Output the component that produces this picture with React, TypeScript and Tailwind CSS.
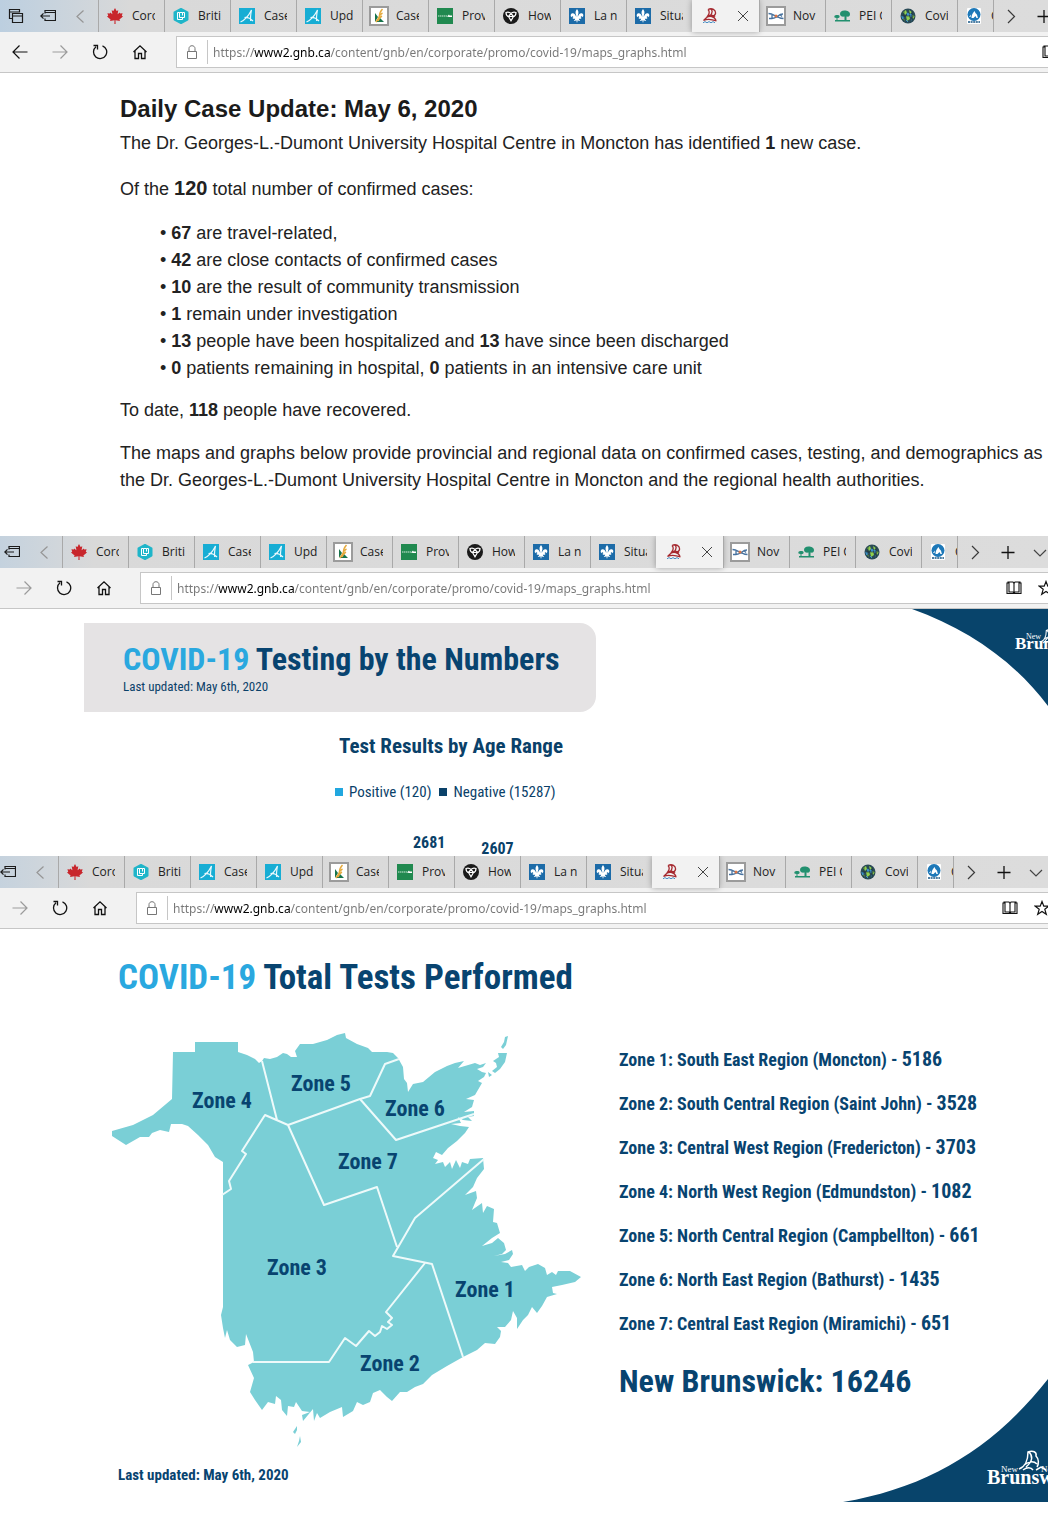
import { type ReactNode } from "react";

const condensed = "font-['Roboto_Condensed','Open_Sans_Condensed','Liberation_Sans_Narrow','Noto_Sans',sans-serif]";

function Svg({ children, className = "size-4", box = "0 0 16 16" }: { children: ReactNode; className?: string; box?: string }) {
  return (
    <svg viewBox={box} className={`shrink-0 ${className}`} fill="none" aria-hidden="true">
      {children}
    </svg>
  );
}

const Leaf = () => (
  <Svg>
    <path
      d="M8 0 6.4 3 4.7 2.2 5.4 6.2 3.2 4.4 2.8 5.6.4 5.2l.8 2.6L0 8.4l3.6 3-.6 1.5 4.5-.6L7.4 16h1.2l-.1-3.7 4.5.6-.6-1.5 3.6-3-1.2-.6.8-2.6-2.4.4-.4-1.2-2.2 1.8.7-4L9.600 3z"
      fill="#c8262c"
    />
  </Svg>
);
const Hexagon = () => (
  <Svg>
    <path d="M8 1 14.500 4.500v7L8 15l-6.500-3.500v-7z" fill="#1fb5c9" stroke="#1fb5c9" strokeWidth="2" strokeLinejoin="round" />
    <path d="M6.500 4.500h-2v7h5v-2M9.500 4.500h2v5h-5v-5h3v3" stroke="#fff" />
  </Svg>
);
const Alberta = () => (
  <Svg>
    <path d="M0 0h16v16H0z" fill="#17add4" />
    <path d="M1.500 14C6 12 10 7 12.500 2c-.8 4-1.300 8-.8 11M5.500 9.500c3-.6 5 0 8.500 3.500" stroke="#e9f8fc" strokeWidth="1.200" />
  </Svg>
);
const Sask = () => (
  <Svg className="size-5" box="0 0 20 20">
    <path d="M1 1h18v18H1z" fill="#fff" stroke="#9b9b9b" strokeWidth="2" />
    <path d="M6 7l3 4-3 5zM11 12l4 4H7z" fill="#16734b" />
    <path d="M13.500 3c-2 2-3 4-3 7-.5 2-2 4-3.500 6M13.500 7c-2 1-3 2-3.500 4M13 10c-2 1-3 2-4 5" stroke="#e5a93c" strokeWidth="1.500" />
  </Svg>
);
const Green = () => (
  <Svg>
    <path d="M0 0h16v16H0z" fill="#20894f" />
    <path d="M1 8h9" stroke="#cfe9da" strokeDasharray="1.500 .5" />
    <path d="M10 8.500l2-2 .5 1H15v1.500h-3z" fill="#fff" />
  </Svg>
);
const Ontario = () => (
  <Svg>
    <circle cx="8" cy="8" r="8" fill="#1a1a1a" />
    <path d="M3 4.500c2-.8 3.500-.5 5 1 1.500-1.500 3-1.800 5-1 0 2-1 3.500-2.500 4L8 12.800 5.500 8.500C4 8 3 6.500 3 4.500zM5.500 8.500 8 5.500l2.500 3z" stroke="#fff" strokeWidth="1.200" />
  </Svg>
);
const Fleur = () => (
  <Svg>
    <path d="M0 0h16v16H0z" fill="#1c6ba8" />
    <path
      d="M8 1C6.500 3 6 4.300 7.200 7.500V9C6.500 6.500 5 5 3.400 5.300 1.500 5.700 1 8 2.600 9.300c.2-1.300 1.300-1.400 1.900 0H3.800v1.500h2.400c-.2 1-.7 1.600-1.500 2 1.200.3 2-.1 2.500-.8L8 15l.8-3c.5.7 1.300 1.100 2.500.8-.8-.4-1.300-1-1.500-2h2.400V9.300h-.7c.6-1.400 1.700-1.300 1.900 0C15 8 14.500 5.700 12.600 5.300 11 5 9.500 6.500 8.800 9V7.500C10 4.300 9.500 3 8 1z"
      fill="#fff"
    />
  </Svg>
);
const Ship = () => (
  <Svg>
    <path d="M6 1.500c4-2 8 .5 7.500 4-.5 2-2 2.500-3 2.500M6 1.500C8.500 4 7 8 1.500 12.500c3-1.500 9-1 13 .5M9 1c2 2 1.500 4-1 7M4.500 9.500c3-2 8-1.500 9.500 3M6.500 7.500c3-.8 5-.3 6.500 1.500" stroke="#a62a30" strokeWidth="1.300" />
    <path d="M1 14.800l2-1.200 2 1.200L7 13.600l2 1.200 2-1.200 2 1.200" stroke="#4a8fc4" />
  </Svg>
);
const NovaScotia = () => (
  <Svg className="size-5" box="0 0 20 20">
    <path d="M1 1h18v18H1z" fill="#fff" stroke="#9b9b9b" strokeWidth="2" />
    <path d="M2.500 7.500c5 0 9 5 15 5M3 12.500h3c5 0 6-4.500 11-4.500M6 9v3M14 8.500l2 2" stroke="#47729f" strokeWidth="1.300" />
    <circle cx="10" cy="10" r="1.500" fill="#db7545" />
  </Svg>
);
const Trees = () => (
  <Svg>
    <path d="M6 6c0-2 1.500-3.500 4.500-3.500S16 4 16 6s-1 3-3.500 2.500V12H16v1.500H1V12h1.500v-2C.5 10 0 9 .5 8s4.500-1.500 5 0-.5 2-2 2v2h7V8.500C8 9 6 8 6 6z" fill="#22906f" />
  </Svg>
);
const Globe = () => (
  <Svg>
    <circle cx="8" cy="8" r="7.500" fill="#294a56" />
    <path d="M3 4l3-2 1 3-2 2zM9 2l3 2-2 2zM6 8l3-1 1 4-3 2zM12 7l3 1-2 3zM2 10l2 0 1 3z" fill="#8fd04e" />
    <path d="M1.500 8l2.500 1-1 2zM7 5l2 1-1 2zM10 6l2 1-1 2zM6 12l2 2M11 12l1 0" fill="#3b92cf" stroke="#3b92cf" />
    <path d="M4 3v10M12 3v10M1 8h14" stroke="#1f3336" strokeWidth=".6" />
  </Svg>
);
const Polar = () => (
  <Svg>
    <rect x="1" width="14" height="16" rx="1" fill="#fff" />
    <circle cx="8" cy="6.500" r="6.500" fill="#1d78b8" />
    <path d="M5.500 10c0-3 1-4.500 3-7 1 1.500.5 2 2 3 1 1.500 1 3 1.500 4h-1.500l-1-2-2 2zM3 9l2-2.500L4.500 9z" fill="#fff" />
    <path d="M2 14h12" stroke="#4f7fa3" strokeWidth="2" strokeDasharray="2 .6" />
  </Svg>
);

const tabs: { icon: () => ReactNode; label: string; active?: boolean; short?: boolean }[] = [
  { icon: Leaf, label: "Coro" },
  { icon: Hexagon, label: "Briti" },
  { icon: Alberta, label: "Case" },
  { icon: Alberta, label: "Upd" },
  { icon: Sask, label: "Case" },
  { icon: Green, label: "Prov" },
  { icon: Ontario, label: "How" },
  { icon: Fleur, label: "La n" },
  { icon: Fleur, label: "Situa" },
  { icon: Ship, label: "", active: true },
  { icon: NovaScotia, label: "Nov" },
  { icon: Trees, label: "PEI C" },
  { icon: Globe, label: "Covi" },
  { icon: Polar, label: "C", short: true },
];

const iconButton = "flex h-8 w-8 shrink-0 items-center justify-center";

function Chrome({ id, shift = "" }: { id: string; shift?: string }) {
  return (
    <header className="overflow-hidden border-b border-[#c6c6c6] bg-[#f2f2f2] font-['Open_Sans','Noto_Sans',sans-serif]">
      <nav className={`flex h-8 bg-linear-to-r from-[#bccfe0] via-[#d9d9d9] via-[130px] to-[#dcdcdc] ${shift}`} aria-label="Tabs">
        <div className="flex w-[98px] shrink-0">
          <button className={iconButton} aria-label="Tabs set aside">
            <Svg>
              <path d="M4.500 10.500h-3v-9h10v3M1.500 4h10M4.500 5.500h10v9h-10zM4.500 8h10" stroke="#1b1b1b" strokeWidth="1.200" />
            </Svg>
          </button>
          <button className={iconButton} aria-label="Set tabs aside">
            <Svg>
              <path d="M5 5.500v-3h10.500v10H5v-2M5 4.500h10.500M.8 8H10M3.500 5.300.8 8l2.700 2.700" stroke="#1b1b1b" strokeWidth="1.200" />
            </Svg>
          </button>
          <button className={iconButton} aria-label="Scroll left">
            <Svg>
              <path d="M11.500 2.500 5 8.500l6.500 6" stroke="#969696" strokeWidth="1.200" />
            </Svg>
          </button>
        </div>
        {tabs.map((tab, i) =>
          tab.active ? (
            <div key={i} className="flex w-[67px] shrink-0 items-center justify-between bg-[#f2f2f2] px-2.5 shadow-[0_0_6px_#0005]">
              <button aria-label="Maps and graphs">
                <tab.icon />
              </button>
              <button aria-label="Close tab">
                <Svg className="size-3" box="0 0 12 12">
                  <path d="m1 1 10 10M11 1 1 11" stroke="#444" />
                </Svg>
              </button>
            </div>
          ) : (
            <button
              key={i}
              className={`flex shrink-0 items-center overflow-hidden border-l border-[#a9a9a9] pl-2 text-left text-xs text-[#222] ${tab.short ? "w-9" : "w-[66px]"}`}
            >
              <span className="flex w-[25px] shrink-0">
                <span className="flex w-4 justify-center">
                  <tab.icon />
                </span>
              </span>
              <span className="w-[23px] overflow-hidden whitespace-nowrap">{tab.label}</span>
            </button>
          ),
        )}
        <div className="flex shrink-0 border-l border-[#a9a9a9] pl-0.5">
          <button className={iconButton} aria-label="Scroll right">
            <Svg>
              <path d="m4 2 6.500 6.500L4 15" stroke="#3a3a3a" strokeWidth="1.200" />
            </Svg>
          </button>
          <button className={iconButton} aria-label="New tab">
            <Svg>
              <path d="M1.500 8.500h13M8 2v13" stroke="#111" strokeWidth="1.300" />
            </Svg>
          </button>
          <button className={iconButton} aria-label="Tab previews">
            <Svg>
              <path d="m2 6 6 6 6-6" stroke="#444" strokeWidth="1.200" />
            </Svg>
          </button>
        </div>
      </nav>
      <div className={`flex h-10 items-center ${shift}`}>
        <div className="flex w-44 shrink-0 gap-2 pl-1">
          <button className={iconButton} aria-label="Back">
            <Svg>
              <path d="M15.500 8H1M7.500 1.500 1 8l6.500 6.500" stroke="#111" strokeWidth="1.200" />
            </Svg>
          </button>
          <button className={iconButton} aria-label="Forward">
            <Svg>
              <path d="M.5 8H15M8.500 1.500 15 8l-6.500 6.500" stroke="#9b9b9b" strokeWidth="1.200" />
            </Svg>
          </button>
          <button className={iconButton} aria-label="Refresh">
            <Svg>
              <path d="M10.500 1.800A6.600 6.600 0 1 1 4 2.800M1.500 1.500h4V5.500" stroke="#111" strokeWidth="1.300" />
            </Svg>
          </button>
          <button className={iconButton} aria-label="Home">
            <Svg>
              <path d="M1.500 8 8 1.800 14.500 8M3 7v7.500h3.500v-5h3v5H13V7" stroke="#111" strokeWidth="1.300" />
            </Svg>
          </button>
        </div>
        <div className="flex h-8 w-[1100px] shrink-0 items-center border border-[#c6c6c6] bg-white">
          <span className="flex w-[30px] justify-center">
            <Svg>
              <path d="M3.500 7.500h9v7h-9zM5 7.500v-3C5 .8 11 .8 11 4.500v3" stroke="#777" />
            </Svg>
          </span>
          <label htmlFor={id} className="sr-only">
            Address
          </label>
          <input
            id={id}
            readOnly
            value="https://www2.gnb.ca/content/gnb/en/corporate/promo/covid-19/maps_graphs.html"
            className="h-6 w-[827px] border-l border-[#c6c6c6] bg-[linear-gradient(90deg,#777_46px,#000_46px,#000_122px,#777_122px)] bg-clip-text pl-[5px] font-['Noto_Sans',sans-serif] text-xs text-transparent outline-none"
          />
          <button className={iconButton} aria-label="Reading view">
            <Svg>
              <path d="M8 3.500v10M1 3h1v-1h5l1 1.500L9 2h5v1h1v10.500H1zM3 2.500v9.500h4l1 1 1-1h4V2.500" stroke="#111" strokeWidth="1.100" />
            </Svg>
          </button>
          <button className={iconButton} aria-label="Favorites">
            <Svg>
              <path d="m8 1.500 1.800 4.700h5l-4 3.100 1.500 5L8 11.400l-4.300 2.900 1.500-5-4-3.100h5z" stroke="#111" strokeWidth="1.200" />
            </Svg>
          </button>
        </div>
      </div>
    </header>
  );
}

const regions = [
  ["Zone 1: South East Region (Moncton)", "5186"],
  ["Zone 2: South Central Region (Saint John)", "3528"],
  ["Zone 3: Central West Region (Fredericton)", "3703"],
  ["Zone 4: North West Region (Edmundston)", "1082"],
  ["Zone 5: North Central Region (Campbellton)", "661"],
  ["Zone 6: North East Region (Bathurst)", "1435"],
  ["Zone 7: Central East Region (Miramichi)", "651"],
];

const zones: [string, number, number][] = [
  ["Zone 1", 485, 1297],
  ["Zone 2", 390, 1371],
  ["Zone 3", 297, 1275],
  ["Zone 4", 222, 1108],
  ["Zone 5", 321, 1091],
  ["Zone 6", 415, 1116],
  ["Zone 7", 368, 1169],
];

const outline =
  "M173 1052H195V1042H238V1052L247 1055 255 1059 259 1063 262 1061 264 1058 270 1059 277 1057 283 1053 287 1054 291 1057 297 1057 295 1051 300 1044 313 1044 327 1040 337 1035 345 1033 346 1038 357 1044 368 1048 372 1052 387 1052 393 1053 398 1058 403 1067 404 1079 407 1083 408 1092 413 1084 423 1082 435 1072 447 1066 455 1063 464 1061 458 1068 475 1063 480 1065 486 1063 483 1067 477 1069 482 1072 486 1073 484 1077 478 1081 482 1083 475 1095 466 1099 474 1100 472 1107 464 1112 474 1111V1116L468 1117 472 1121 463 1120 458 1117 461 1123 451 1124 460 1126 469 1127 465 1133 457 1141 448 1148 442 1155 436 1152 433 1158 438 1160 435 1164 443 1162 445 1167 450 1162 452 1169 456 1160 460 1168 462 1162 468 1164 470 1159 483 1158 484 1169 477 1178 473 1187 465 1195 476 1191 477 1198 472 1210 482 1203 483 1213 487 1206 494 1209 493 1222 497 1223 500 1233 492 1238 482 1246 492 1243 498 1238 504 1243 506 1250 502 1254 494 1256 505 1254 512 1250 513 1254 509 1260 501 1262 508 1263 511 1267 522 1265 525 1271 529 1267 538 1264 545 1268 547 1275 552 1272 556 1275 558 1271 570 1271 581 1277 575 1282 562 1285 552 1287 553 1293 557 1294 547 1297 542 1306 537 1313 532 1307 528 1315 523 1320 517 1329 517 1318 513 1311 511 1320 505 1327 497 1327 501 1331 500 1337 495 1344 485 1343 477 1350 463 1357 447 1366 432 1375 423 1384 415 1387 407 1392 400 1392 392 1401 387 1397 380 1390 373 1393 370 1402 363 1405 357 1402 353 1411 343 1417 342 1407 330 1412 320 1418 317 1413 314 1421 313 1409 308 1415 303 1421 302 1415 310 1412 302 1411 296 1402 294 1407 288 1406 287 1416 282 1410 281 1400 276 1396 275 1404 268 1402 262 1410 255 1400 250 1392 254 1378 248 1365 254 1362 253 1352 246 1334 245 1345 237 1347 230 1340 227 1330 225 1338 223 1328 221 1315 223 1307V1162L215 1157 208 1145 198 1135 188 1126 182 1124 171 1124 169 1132 160 1130 152 1133 149 1137 140 1137 126 1145 112 1136V1131L133 1125 153 1115 172 1099z";

const islands =
  "M508 1036 505 1037 504 1042 501 1047 503 1049 506 1045zM507 1053 498 1053 499 1057 493 1061 496 1063 497 1067 492 1071 495 1073 500 1069 505 1062zM488 1072 492 1075 489 1077zM297 1426 293 1432 295 1434 297 1430zM300 1436 301 1442 297 1447 299 1441z";

const borders =
  "M262 1061 277 1120M222 1195 231 1189 229 1181 246 1154 242 1151 265 1115 288 1125 360 1099 370 1096 385 1064 399 1059M360 1099 396 1140 474 1114M288 1125 324 1205 377 1187 397 1247M484 1159 415 1218 393 1256 432 1264 463 1357M425 1263 386 1312 392 1318 388 1322 392 1325 387 1329 382 1326 380 1332 375 1336 369 1331 356 1346 345 1338 329 1362H253";

function ShipMark() {
  return (
    <g fill="none" stroke="#fff">
      <path d="M0 19c6-2 9-9 9-17 5-2 9 0 8 4 3 3 3 8 1 11M10 2c4 4 4 9-3 15M5 15c5-4 10-4 13-1M4 20c4-3 8-3 10 0M17 20l5-3 5 3" strokeWidth="1.500" />
    </g>
  );
}

const logoText = "font-['Liberation_Serif',serif] font-bold";

export default function App() {
  return (
    <main className="overflow-hidden bg-white">
      <section>
        <Chrome id="address-1" />
        <article className="overflow-hidden pt-5 pb-[42px] pl-[120px] font-['Liberation_Sans',Arial,sans-serif] text-lg leading-[27px] text-[#222]">
          <h1 className="text-2xl leading-8 font-bold text-[#1b1b1b]">Daily Case Update: May 6, 2020</h1>
          <p className="mt-[5px]">
            The Dr. Georges-L.-Dumont University Hospital Centre in Moncton has identified <b>1</b> new case.
          </p>
          <p className="mt-[18px]">
            Of the <b className="text-xl leading-[27px]">120</b> total number of confirmed cases:
          </p>
          <ul className="mt-[17px] pl-10">
            <li>• <b>67</b> are travel-related,</li>
            <li>• <b>42</b> are close contacts of confirmed cases</li>
            <li>• <b>10</b> are the result of community transmission</li>
            <li>• <b>1</b> remain under investigation</li>
            <li>• <b>13</b> people have been hospitalized and <b>13</b> have since been discharged</li>
            <li>• <b>0</b> patients remaining in hospital, <b>0</b> patients in an intensive care unit</li>
          </ul>
          <p className="mt-[15px]">To date, <b>118</b> people have recovered.</p>
          <p className="mt-4 whitespace-nowrap">
            The maps and graphs below provide provincial and regional data on confirmed cases, testing, and demographics as reported by
            <br />
            the Dr. Georges-L.-Dumont University Hospital Centre in Moncton and the regional health authorities.
          </p>
        </article>
      </section>

      <section>
        <Chrome id="address-2" shift="-ml-9" />
        <div className={`relative h-[247px] overflow-hidden pt-3.5 pl-[84px] text-[#0a4169] ${condensed}`}>
          <svg viewBox="0 0 136 97" className="absolute top-0 right-0 w-[136px]" aria-label="New Brunswick">
            <path d="M0 0C56 20 102 52 136 97V0z" fill="#08446b" />
            <g transform="translate(128 20) scale(.7)"><ShipMark /></g>
            <text x="114" y="30" fill="#fff" fontSize="8" className="font-['Liberation_Serif',serif]">New</text>
            <text x="103" y="40" fill="#fff" fontSize="17" className={logoText}>Brunswick</text>
          </svg>
          <div className="h-[89px] w-[512px] rounded-r-2xl bg-[#e5e3e4] pt-4 pl-[39px]">
            <h2 className="text-[32px] leading-10 font-bold whitespace-nowrap text-[#084470]">
              <span className="text-[#2aa8df]">COVID-19</span> Testing by the Numbers
            </h2>
            <p className="text-[13px] leading-4">Last updated: May 6th, 2020</p>
          </div>
          <h3 className="mt-5 w-[734px] text-center text-[21px] leading-7 font-bold">Test Results by Age Range</h3>
          <ul className="mt-[22px] ml-[251px] flex items-center gap-2 text-[15px] leading-5">
            <li className="flex items-center gap-1.5"><i className="size-2 bg-[#21a7df]" />Positive (120)</li>
            <li className="flex items-center gap-1.5"><i className="size-2 bg-[#0a4169]" />Negative (15287)</li>
          </ul>
          <div className="mt-[29px] ml-[329px] flex gap-9 text-base leading-6 font-bold">
            <span>2681</span>
            <span className="pt-1.5">2607</span>
          </div>
        </div>
      </section>

      <section>
        <Chrome id="address-3" shift="-ml-10" />
        <div className={`relative flex min-h-[599px] flex-col overflow-hidden pt-[29px] text-[#084470] ${condensed}`}>
          <svg viewBox="0 0 205 123" className="absolute right-0 bottom-[26px] w-[205px]" aria-label="New Brunswick">
            <path d="M0 123C84 109 150 70 205 0V123z" fill="#08446b" />
            <g transform="translate(176 71)"><ShipMark /></g>
            <text x="158" y="93" fill="#fff" fontSize="9" className="font-['Liberation_Serif',serif]">New</text>
            <text x="198" y="93" fill="#fff" fontSize="9" className="font-['Liberation_Serif',serif]">Nouveau</text>
            <text x="144" y="105" fill="#fff" fontSize="20" className={logoText}>Brunswick</text>
          </svg>
          <h2 className="pl-[118px] text-[35px] leading-10 font-bold whitespace-nowrap">
            <span className="text-[#2aa8df]">COVID-19</span> Total Tests Performed
          </h2>
          <div className="mt-[35px] flex gap-9 pl-28">
            <svg viewBox="112 1033 471 415" className="h-[415px] w-[471px] shrink-0" aria-label="Health zones of New Brunswick">
              <path d={outline} fill="#7acfd6" />
              <path d={islands} fill="#7acfd6" />
              <path d={borders} fill="none" stroke="#eefafa" strokeWidth="2" strokeLinejoin="round" />
              {zones.map(([name, x, y]) => (
                <text key={name} x={x} y={y} textAnchor="middle" fill="#084470" fontSize="22" fontWeight="700">
                  {name}
                </text>
              ))}
            </svg>
            <div className="pt-3 font-bold whitespace-nowrap">
              <ul>
                {regions.map(([name, count]) => (
                  <li key={name} className="h-11 text-lg leading-7">
                    {name} - <span className="text-xl leading-7">{count}</span>
                  </li>
                ))}
              </ul>
              <p className="mt-2 text-[32px] leading-10">New Brunswick: 16246</p>
            </div>
          </div>
          <p className="mt-[15px] pl-[118px] text-[15px] leading-6 font-bold">Last updated: May 6th, 2020</p>
        </div>
      </section>
    </main>
  );
}
